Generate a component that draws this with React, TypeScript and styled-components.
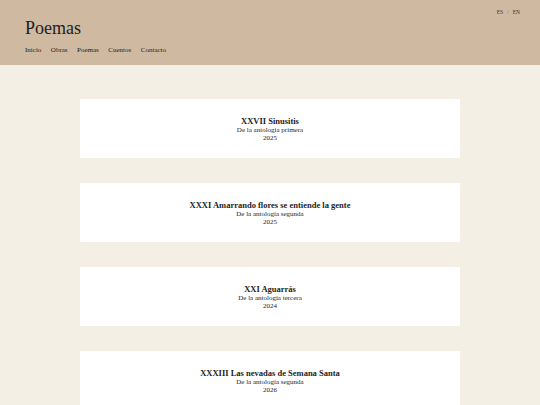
import styled, { createGlobalStyle } from "styled-components";

const GlobalStyle = createGlobalStyle`
  html, body {
    margin: 0;
    padding: 0;
    background-color: #f4efe5;
    font-family: "Liberation Serif", "Times New Roman", serif;
    color: #1e1e1e;
  }
`;

const Header = styled.header`
  height: 65px;
  background-color: #cfb9a1;
  position: relative;
  padding: 0 25px;
  box-sizing: border-box;
  display: flex;
  flex-direction: column;
`;

const SiteTitle = styled.h1`
  margin: 17px 0 0;
  font-size: 18px;
  font-weight: normal;
  line-height: 22px;
`;

const Nav = styled.nav`
  display: flex;
  gap: 9.5px;
  margin-top: 7px;
  font-size: 7px;
  line-height: 9px;
  a {
    color: inherit;
    text-decoration: none;
  }
`;

const LangSwitch = styled.div`
  position: absolute;
  top: 8px;
  right: 20px;
  display: flex;
  gap: 4px;
  font-size: 5.5px;
  line-height: 8px;
  color: #333;
  .sep {
    color: #666;
  }
`;

const Main = styled.main`
  display: flex;
  flex-direction: column;
  align-items: center;
  gap: 25px;
  padding: 34px 0 40px;
`;

const Card = styled.article`
  width: 380px;
  height: 59px;
  background-color: #ffffff;
  display: flex;
  flex-direction: column;
  align-items: center;
  justify-content: center;
  text-align: center;
  padding-top: 2px;
  box-sizing: border-box;
`;

const CardTitle = styled.h2`
  margin: 0;
  font-size: 8.5px;
  font-weight: bold;
  line-height: 9px;
`;

const CardLine = styled.div`
  font-size: 7px;
  line-height: 8px;
`;

const poems = [
  { title: "XXVII Sinusitis", book: "De la antología primera", year: 2025 },
  { title: "XXXI Amarrando flores se entiende la gente", book: "De la antología segunda", year: 2025 },
  { title: "XXI Aguarrás", book: "De la antología tercera", year: 2024 },
  { title: "XXXIII Las nevadas de Semana Santa", book: "De la antología segunda", year: 2026 },
  { title: "XII El patio de la abuela", book: "De la antología primera", year: 2023 },
];

const App: React.FC = () => {
  return (
    <>
      <GlobalStyle />
      <Header>
        <SiteTitle>Poemas</SiteTitle>
        <Nav>
          <a href="#">Inicio</a>
          <a href="#">Obras</a>
          <a href="#">Poemas</a>
          <a href="#">Cuentos</a>
          <a href="#">Contacto</a>
        </Nav>
        <LangSwitch>
          <span>ES</span>
          <span className="sep">/</span>
          <span>EN</span>
        </LangSwitch>
      </Header>
      <Main>
        {poems.map((p) => (
          <Card key={p.title}>
            <CardTitle>{p.title}</CardTitle>
            <CardLine>{p.book}</CardLine>
            <CardLine>{p.year}</CardLine>
          </Card>
        ))}
      </Main>
    </>
  );
};

export default App;
